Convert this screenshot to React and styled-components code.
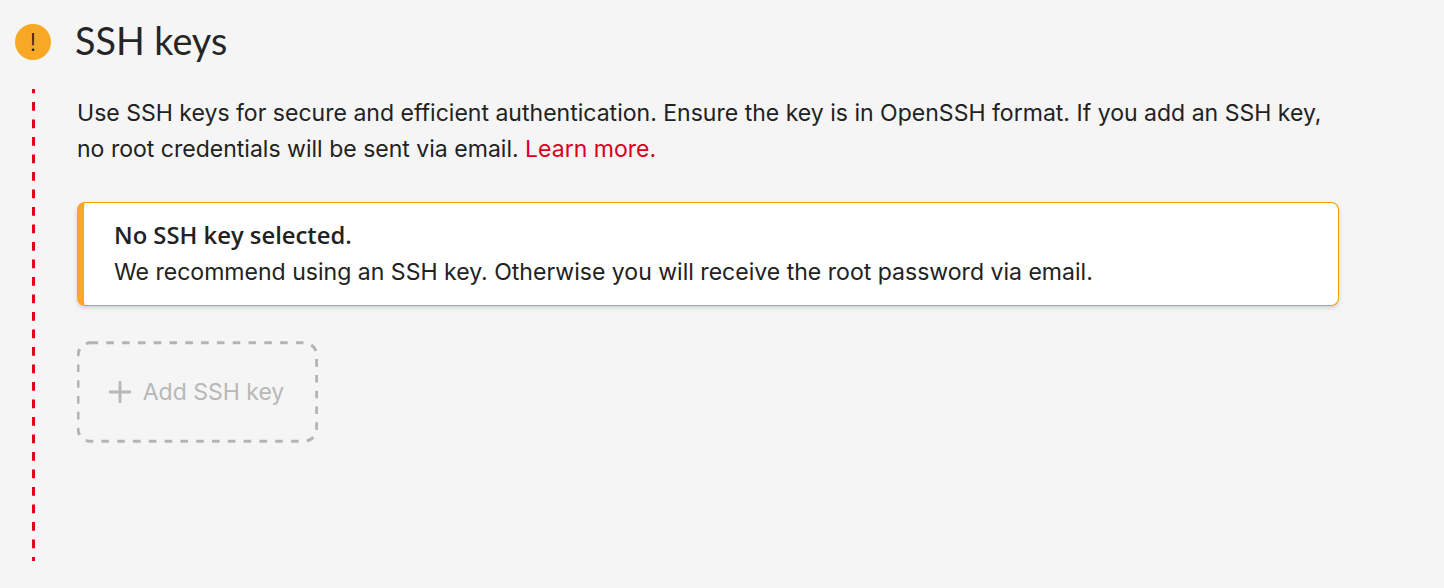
import React from 'react';
import styled, { createGlobalStyle } from 'styled-components';
import { Plus } from 'lucide-react';

const GlobalStyle = createGlobalStyle`
  html, body {
    margin: 0;
    padding: 0;
    background: #f5f5f5;
  }
`;

const Page = styled.div`
  width: 1444px;
  height: 588px;
  overflow: hidden;
  box-sizing: border-box;
  padding: 24px 0 0 15px;
  font-family: Inter, "Liberation Sans", sans-serif;
  color: #222;
`;

const Header = styled.div`
  display: flex;
  align-items: center;
  height: 36px;
  gap: 24px;
`;

const WarnBadge = styled.div`
  width: 36px;
  height: 36px;
  border-radius: 50%;
  background: #f9a825;
  display: flex;
  align-items: center;
  justify-content: center;
  font-size: 24px;
  font-weight: 300;
  color: #222;
`;

const Title = styled.h2`
  margin: 0 0 3px;
  font-family: Lato, sans-serif;
  font-weight: 400;
  font-size: 37.7px;
  line-height: 36px;
  color: #252525;
`;

const Body = styled.div`
  display: flex;
  margin-top: 29px;
`;

const Rail = styled.div`
  width: 3px;
  height: 472px;
  margin-left: 17px;
  background: linear-gradient(to bottom, #e2001a 9px, transparent 9px) 0 13px / 3px 17.5px repeat-y;
`;

const Content = styled.div`
  margin-left: 42px;
  width: 1262px;
`;

const Intro = styled.p`
  margin: 7px 0 0;
  font-size: 23.04px;
  line-height: 35.5px;
`;

const LearnMore = styled.a`
  color: #d8001a;
  text-decoration: none;
`;

const Notice = styled.div`
  box-sizing: border-box;
  margin-top: 35px;
  height: 104px;
  padding: 15px 30px;
  background: #fff;
  border: 1px solid #fb9a00;
  border-left: 7px solid #f9a825;
  border-radius: 8px;
  box-shadow: 0 2px 4px rgba(0, 0, 0, 0.15);
  font-size: 23.06px;
  line-height: 36px;
`;

const NoticeTitle = styled.div`
  margin-bottom: 2px;
  font-family: "Open Sans", sans-serif;
  font-weight: 600;
  font-size: 23.8px;
  line-height: 34px;
`;

const AddButton = styled.button`
  position: relative;
  box-sizing: border-box;
  margin-top: 35px;
  width: 241px;
  height: 102px;
  display: flex;
  align-items: center;
  justify-content: center;
  gap: 6px;
  padding: 0 8px 0 0;
  background: transparent;
  border: 0;
  color: #b8b8b8;
  font-family: inherit;
  font-size: 23px;
`;

const DashedFrame = styled.svg`
  position: absolute;
  inset: 0;
  width: 100%;
  height: 100%;
  fill: none;
  stroke: #b4b4b4;
  stroke-width: 3;
  stroke-dasharray: 7.6 8.2;
`;

export default function App() {
  return (
    <Page>
      <GlobalStyle />
      <Header>
        <WarnBadge>!</WarnBadge>
        <Title>SSH keys</Title>
      </Header>
      <Body>
        <Rail />
        <Content>
          <Intro>
            Use SSH keys for secure and efficient authentication. Ensure the key is in OpenSSH format. If you add an SSH key,
            <br />
            no root credentials will be sent via email. <LearnMore href="#">Learn more.</LearnMore>
          </Intro>
          <Notice>
            <NoticeTitle>No SSH key selected.</NoticeTitle>
            <div>We recommend using an SSH key. Otherwise you will receive the root password via email.</div>
          </Notice>
          <AddButton>
            <DashedFrame viewBox="0 0 241 102">
              <rect x="1" y="1.8" width="238.7" height="98.5" rx="12.5" />
            </DashedFrame>
            <Plus size={34} strokeWidth={2} />
            Add SSH key
          </AddButton>
        </Content>
      </Body>
    </Page>
  );
}
